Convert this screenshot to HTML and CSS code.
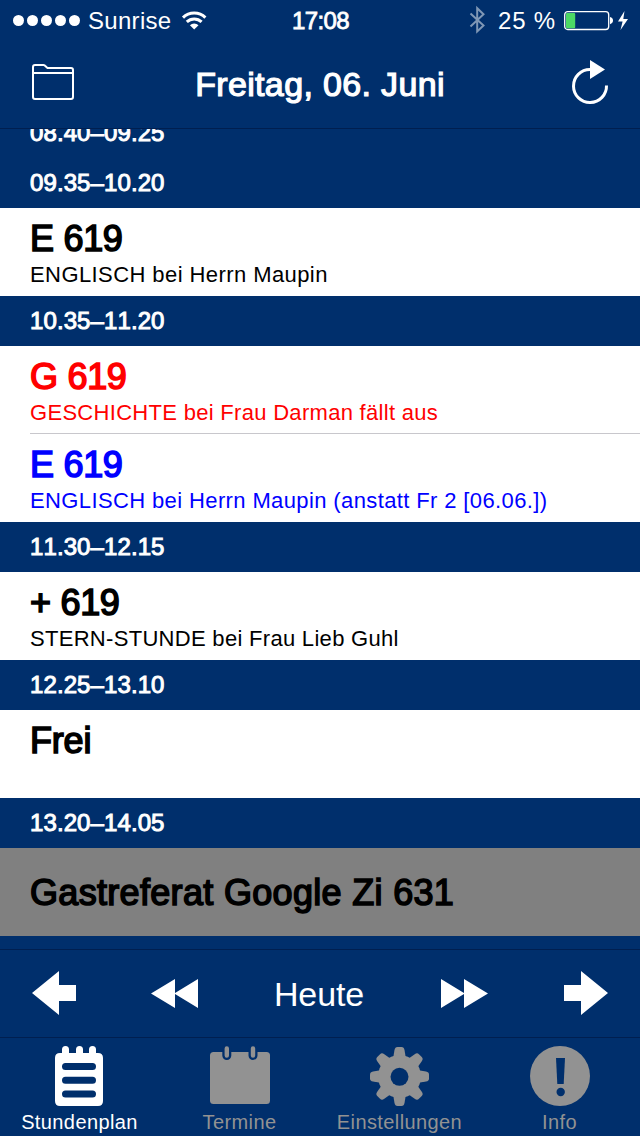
FILE: index.html
```html
<!DOCTYPE html>
<html lang="de">
<head>
<meta charset="utf-8">
<title>Stundenplan</title>
<link rel="stylesheet" href="styles.css">
</head>
<body>
<div class="app">
  <div class="status">
    <div class="status-left">
      <svg class="signal" width="68" height="12" viewBox="0 0 68 12"><g fill="#fff"><circle cx="5.5" cy="6.500" r="5.500"/><circle cx="19.500" cy="6.500" r="5.500"/><circle cx="33.500" cy="6.500" r="5.500"/><circle cx="47.500" cy="6.500" r="5.500"/><circle cx="61.500" cy="6.500" r="5.500"/></g></svg>
      <span class="carrier">Sunrise</span>
      <svg class="wifi" width="26" height="19" viewBox="0 0 26 19"><g fill="none" stroke="#fff" stroke-width="3"><path d="M2 6.600a16 16 0 0 1 22.400 0"/><path d="M5.800 10.900a10.700 10.700 0 0 1 14.800 0"/></g><path d="M13.200 18.600l-4.300-4.300a6 6 0 0 1 8.600 0z" fill="#fff"/></svg>
    </div>
    <span class="clock">17:08</span>
    <div class="status-right">
      <svg class="bluetooth" width="17" height="28" viewBox="0 0 17 28"><path d="M1.500 7.500L14.500 19.500 8.200 25.400V2.200L14.500 8.200 1.500 20.500" fill="none" stroke="#7f97b5" stroke-width="2"/></svg>
      <span class="percent">25 %</span>
      <svg class="battery" width="66" height="22" viewBox="0 0 66 22"><rect x=".7" y="1.700" width="44" height="17.800" rx="3" fill="none" stroke="#fff" stroke-width="1.300"/><rect x="2" y="3" width="9.200" height="15.200" rx="1" fill="#4cd964"/><path d="M46 7q3 .7 3 3.600t-3 3.600z" fill="#fff"/><path d="M60.500 1L54 11.400h4.600L56.500 20 64 9h-4.700z" fill="#fff"/></svg>
    </div>
  </div>
  <header class="nav">
    <svg width="44" height="36" viewBox="0 0 44 36"><path d="M1 9V3q0-2 2-2h8.500q1.300 0 2 1.300L15.500 4H39q2 0 2 2v27q0 2-2 2H3q-2 0-2-2V9h40" fill="none" stroke="#fff" stroke-width="2" stroke-linejoin="round"/></svg>
    <h1 class="title">Freitag, 06. Juni</h1>
    <svg width="38" height="46" viewBox="0 0 38 46"><path d="M36.500 26.500A16.500 16.500 0 1 1 20 10.500" fill="none" stroke="#fff" stroke-width="3"/><path d="M20 1L35 10.500 20 20z" fill="#fff"/></svg>
  </header>
  <main class="list">
    <div class="slots">
      <h2 class="time">08.40–09.25</h2>
      <h2 class="time">09.35–10.20</h2>
      <article class="lesson"><h3 class="code">E 619</h3><p class="detail">ENGLISCH bei Herrn Maupin</p></article>
      <h2 class="time">10.35–11.20</h2>
      <article class="lesson cancelled"><h3 class="code">G 619</h3><p class="detail tight">GESCHICHTE bei Frau Darman fällt aus</p></article>
      <article class="lesson moved"><h3 class="code">E 619</h3><p class="detail long">ENGLISCH bei Herrn Maupin (anstatt Fr 2 [06.06.])</p></article>
      <h2 class="time">11.30–12.15</h2>
      <article class="lesson"><h3 class="code">+ 619</h3><p class="detail tight">STERN-STUNDE bei Frau Lieb Guhl</p></article>
      <h2 class="time">12.25–13.10</h2>
      <article class="lesson"><h3 class="code short">Frei</h3></article>
      <h2 class="time">13.20–14.05</h2>
      <article class="lesson event"><h3 class="code word">Gastreferat Google Zi 631</h3></article>
    </div>
  </main>
  <div class="toolbar">
    <svg width="44" height="44" viewBox="0 0 44 44"><path d="M0 21L27 -1v14h17v16H27v14z" fill="#fff"/></svg>
    <svg width="48" height="30" viewBox="0 0 48 30"><path d="M0 14.500L24 0v14L47 0v29L24 15v14z" fill="#fff"/></svg>
    <span class="today">Heute</span>
    <svg width="48" height="30" viewBox="0 0 48 30"><path d="M47 14.500L23 0v14L0 0v29L23 15v14z" fill="#fff"/></svg>
    <svg width="44" height="44" viewBox="0 0 44 44"><path d="M44 21L17 -1v14H0v16h17v14z" fill="#fff"/></svg>
  </div>
  <nav class="tabs">
    <div class="tab active">
      <svg width="60" height="60" viewBox="0 0 60 60"><path d="M12 7V3.500a3.500 3.500 0 0 1 7 0V7h7V3.500a3.500 3.500 0 0 1 7 0V7h6V3.500a3.500 3.500 0 0 1 7 0V7h2q5 0 5 5v43q0 5-5 5H10q-5 0-5-5V12q0-5 5-5z" fill="#fff"/><path d="M15.500 20.500h27M15.500 34.200h27M15.500 48h27" stroke="#002f6c" stroke-width="7" stroke-linecap="round"/></svg>
      <span>Stundenplan</span>
    </div>
    <div class="tab">
      <svg width="60" height="60" viewBox="0 0 60 60"><rect x="0" y="6" width="60" height="52" rx="3.500" fill="#929292"/><path d="M16.800 3v6.500M43 3v6.500" stroke="#002f6c" stroke-width="9" stroke-linecap="round"/><path d="M16.800 2.500v7M43 2.500v7" stroke="#929292" stroke-width="4.400" stroke-linecap="round"/></svg>
      <span>Termine</span>
    </div>
    <div class="tab">
      <svg width="60" height="60" viewBox="0 0 60 60"><defs><path id="tooth" d="M22.500 16L24.500 4Q25 1 27.500 1h4q2.500 0 3 3l2 12z"/></defs><g fill="#929292"><use href="#tooth"/><use href="#tooth" transform="rotate(45 29.500 30.500)"/><use href="#tooth" transform="rotate(90 29.500 30.500)"/><use href="#tooth" transform="rotate(135 29.500 30.500)"/><use href="#tooth" transform="rotate(180 29.500 30.500)"/><use href="#tooth" transform="rotate(225 29.500 30.500)"/><use href="#tooth" transform="rotate(270 29.500 30.500)"/><use href="#tooth" transform="rotate(315 29.500 30.500)"/><circle cx="29.500" cy="30.500" r="21.500"/></g><circle cx="29.500" cy="30.800" r="9" fill="#002f6c"/></svg>
      <span>Einstellungen</span>
    </div>
    <div class="tab">
      <svg width="60" height="60" viewBox="0 0 60 60"><circle cx="30" cy="30" r="30" fill="#929292"/><path d="M26 12h9l-1.300 26h-6.400z" fill="#002f6c"/><circle cx="30.700" cy="46" r="4.200" fill="#002f6c"/></svg>
      <span>Info</span>
    </div>
  </nav>
</div>
</body>
</html>
```
FILE: styles.css
```css
* { box-sizing: border-box; margin: 0; }

body {
  background: #002f6c;
  color: #fff;
  font-family: "Liberation Sans", Arial, sans-serif;
}

svg { display: block; flex: none; overflow: visible; }

/* Medium weight: regular outlines thickened slightly */
.clock, .title, .time, .code {
  font-weight: 400;
  font-kerning: none;
  -webkit-text-stroke: 1.2px currentColor;
}

.app {
  display: flex;
  flex-direction: column;
  width: 640px;
  height: 1136px;
  overflow: hidden;
}

.status {
  display: grid;
  grid-template-columns: 1fr auto 1fr;
  align-items: center;
  height: 40px;
  padding: 2px 10px 0 13px;
  font-size: 24px;
  line-height: 28px;
  white-space: nowrap;
}
.status-left, .status-right { display: flex; align-items: center; }
.status-right { justify-content: flex-end; }
.signal { margin-top: -2px; }
.carrier { margin-left: 7px; letter-spacing: .3px; }
.wifi { margin: -2px 0 0 10px; }
.clock { margin-left: -2px; letter-spacing: -.6px; -webkit-text-stroke-width: .8px; }
.bluetooth { margin-top: -2px; }
.percent { margin: 0 8px 0 12px; letter-spacing: .8px; }
.battery { margin-top: -1px; }

.nav {
  display: flex;
  align-items: center;
  justify-content: space-between;
  height: 89px;
  padding: 0 32px;
  border-bottom: 1px solid #001f50;
}
.nav svg { margin-top: -5px; }
.title { margin-right: 6px; font-size: 34px; line-height: 40px; letter-spacing: .35px; }

.list { height: 820px; overflow: hidden; }
.slots { margin-top: -21px; }
.time {
  height: 50px;
  padding-left: 30px;
  font-size: 24px;
  line-height: 50px;
  letter-spacing: .1px;
  -webkit-text-stroke-width: 1px;
}
.lesson {
  height: 88px;
  padding: 9px 0 0 30px;
  background: #fff;
  color: #000;
}
.code { margin-bottom: 1px; font-size: 36px; line-height: 43px; letter-spacing: -.3px; -webkit-text-stroke-width: 1.6px; }
.short { letter-spacing: -.2px; }
.word { letter-spacing: .32px; }
.detail { font-size: 22px; line-height: 28px; letter-spacing: .42px; white-space: nowrap; }
.tight { letter-spacing: .3px; }
.long { letter-spacing: .38px; }
.cancelled {
  color: #f00;
  background: linear-gradient(#c8c7cc, #c8c7cc) 30px 87px / 100% 1px no-repeat #fff;
}
.moved { color: #00f; }
.event { display: flex; align-items: center; padding-top: 2px; background: #808080; }

.toolbar {
  display: flex;
  align-items: center;
  justify-content: space-between;
  height: 88px;
  padding: 0 32px;
  border-top: 1px solid #001f50;
}
.today { font-size: 34px; letter-spacing: -.1px; line-height: 40px; transform: translateX(-1px); }

.tabs {
  display: grid;
  grid-template-columns: repeat(4, 160px);
  height: 99px;
  border-top: 1px solid #001f50;
}
.tab {
  display: flex;
  flex-direction: column;
  align-items: center;
  gap: 4px;
  padding-top: 8px;
  margin-left: -1px;
  color: #929292;
  font-size: 20px;
  line-height: 24px;
  letter-spacing: .4px;
}
.active { color: #fff; }
```
